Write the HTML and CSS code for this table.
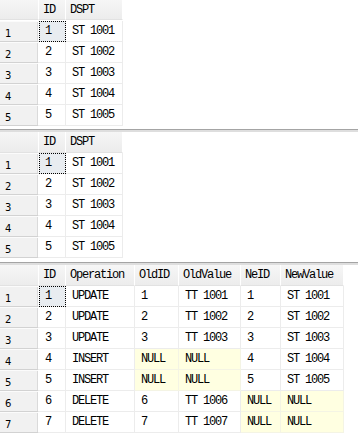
FILE: index.html
```html
<!DOCTYPE html>
<html>
<head>
<meta charset="utf-8">
<link rel="stylesheet" href="styles.css">
</head>
<body>
<div class="pane pane-first">
  <div class="grid g2">
    <div class="corner"></div><div class="hd">ID</div><div class="hd">DSPT</div>
    <div class="rh">1</div><div class="c sel">1</div><div class="c">ST 1001</div>
    <div class="rh">2</div><div class="c">2</div><div class="c">ST 1002</div>
    <div class="rh">3</div><div class="c">3</div><div class="c">ST 1003</div>
    <div class="rh">4</div><div class="c">4</div><div class="c">ST 1004</div>
    <div class="rh">5</div><div class="c">5</div><div class="c">ST 1005</div>
  </div>
</div>
<div class="splitter"></div>
<div class="pane">
  <div class="grid g2">
    <div class="corner"></div><div class="hd">ID</div><div class="hd">DSPT</div>
    <div class="rh">1</div><div class="c sel">1</div><div class="c">ST 1001</div>
    <div class="rh">2</div><div class="c">2</div><div class="c">ST 1002</div>
    <div class="rh">3</div><div class="c">3</div><div class="c">ST 1003</div>
    <div class="rh">4</div><div class="c">4</div><div class="c">ST 1004</div>
    <div class="rh">5</div><div class="c">5</div><div class="c">ST 1005</div>
  </div>
</div>
<div class="splitter"></div>
<div class="pane pane-last">
  <div class="grid g7">
    <div class="corner"></div><div class="hd">ID</div><div class="hd">Operation</div><div class="hd">OldID</div><div class="hd">OldValue</div><div class="hd">NeID</div><div class="hd">NewValue</div>
    <div class="rh">1</div><div class="c sel">1</div><div class="c">UPDATE</div><div class="c">1</div><div class="c">TT 1001</div><div class="c">1</div><div class="c">ST 1001</div>
    <div class="rh">2</div><div class="c">2</div><div class="c">UPDATE</div><div class="c">2</div><div class="c">TT 1002</div><div class="c">2</div><div class="c">ST 1002</div>
    <div class="rh">3</div><div class="c">3</div><div class="c">UPDATE</div><div class="c">3</div><div class="c">TT 1003</div><div class="c">3</div><div class="c">ST 1003</div>
    <div class="rh">4</div><div class="c">4</div><div class="c">INSERT</div><div class="c null">NULL</div><div class="c null">NULL</div><div class="c">4</div><div class="c">ST 1004</div>
    <div class="rh">5</div><div class="c">5</div><div class="c">INSERT</div><div class="c null">NULL</div><div class="c null">NULL</div><div class="c">5</div><div class="c">ST 1005</div>
    <div class="rh">6</div><div class="c">6</div><div class="c">DELETE</div><div class="c">6</div><div class="c">TT 1006</div><div class="c null">NULL</div><div class="c null">NULL</div>
    <div class="rh">7</div><div class="c">7</div><div class="c">DELETE</div><div class="c">7</div><div class="c">TT 1007</div><div class="c null">NULL</div><div class="c null">NULL</div>
  </div>
</div>
</body>
</html>
```
FILE: styles.css
```css
html, body {
  margin: 0;
  padding: 0;
  background: #ffffff;
}
body {
  width: 358px;
  height: 439px;
  overflow: hidden;
  font-family: "Liberation Mono", "Courier New", monospace;
  font-size: 12px;
  color: #000;
}
.pane {
  padding-bottom: 4px;
  background: #fff;
}
.pane-first {
  padding-bottom: 3px;
}
.pane-first .corner,
.pane-first .hd {
  height: 20px;
}
.pane-last {
  padding-bottom: 0;
}
.splitter {
  height: 3px;
  border-top: 1px solid #a4a4a4;
  background: #dedede;
  box-sizing: border-box;
}
.grid {
  display: grid;
  grid-auto-rows: 21px;
  width: max-content;
}
.g2 {
  grid-template-columns: 39px 27px 57px;
}
.g7 {
  grid-template-columns: 39px 27px 69px 44px 62px 40px 63px;
}
.corner,
.hd {
  height: 21px;
  box-sizing: border-box;
  background: linear-gradient(#f6f6f6, #ececec);
  border-right: 1px solid #ffffff;
  border-bottom: 1px solid #e2e2e2;
}
.hd {
  padding-left: 4px;
  line-height: 20px;
  letter-spacing: -1.2px;
  white-space: nowrap;
}
.rh {
  box-sizing: border-box;
  background: #f1f1f1;
  border-right: 1px solid #ffffff;
  border-bottom: 1px solid #d2d2d2;
  box-shadow: inset 0 1px #fbfbfb, inset -1px 0 #dadada;
  font-family: "DejaVu Sans", sans-serif;
  font-size: 10px;
  padding-left: 5px;
  padding-top: 7px;
  line-height: 12px;
}
.c {
  box-sizing: border-box;
  border-right: 1px solid #ececec;
  border-bottom: 1px solid #ececec;
  padding-left: 6px;
  line-height: 20px;
  letter-spacing: -1.2px;
  white-space: nowrap;
}
.sel {
  background: #e8ecf0;
  outline: 1px dotted #000;
  outline-offset: -1px;
}
.null {
  background: #ffffe1;
  border-right-color: #f4f4e4;
  border-bottom-color: #f4f4e4;
}
```
